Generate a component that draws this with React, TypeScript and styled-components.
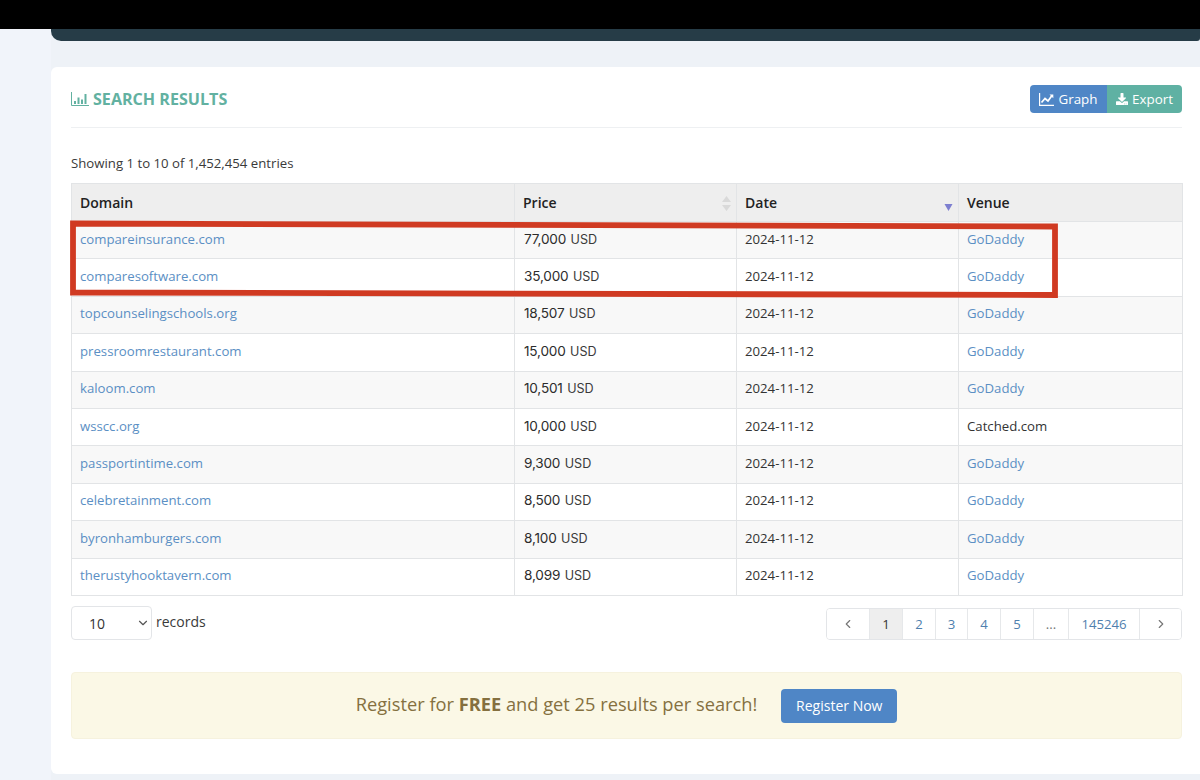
import { createGlobalStyle } from "styled-components"
import styled from "styled-components"
import { ChevronDown, ChevronLeft, ChevronRight } from "lucide-react"
import { FaDownload } from "react-icons/fa"

const GlobalStyle = createGlobalStyle`
  html, body {
    margin: 0;
    height: 780px;
    overflow: hidden;
    background: #f1f4fa;
    font-family: "Open Sans", "Liberation Sans", sans-serif;
    font-size: 14px;
    color: #333;
  }
`

const TopBar = styled.div`
  height: 29px;
  background: #000;
`

const Main = styled.main`
  margin-left: 51px;
  height: 751px;
  background: #eef2f7;
`

const DarkStrip = styled.div`
  height: 12px;
  background: #263c47;
  border-bottom-left-radius: 10px;
  border-bottom-right-radius: 3px;
`

const Card = styled.section`
  position: relative;
  margin-top: 26px;
  height: 707px;
  box-sizing: border-box;
  padding: 0 18px 0 20px;
  background: #fff;
  border-radius: 6px 0 0 6px;
`

const CardHeader = styled.header`
  display: flex;
  justify-content: space-between;
  align-items: center;
  height: 61px;
  box-sizing: border-box;
  padding-top: 4px;
  border-bottom: 1px solid #eef0f2;
`

const Title = styled.h2`
  display: flex;
  align-items: center;
  gap: 4px;
  margin: 0;
  font-size: 16.1px;
  font-weight: 700;
  color: #62b1a1;
`

const ButtonGroup = styled.div`
  display: flex;
  height: 28px;
  border-radius: 4px;
  overflow: hidden;
`

const GroupButton = styled.button<{ $tone: "blue" | "teal"; $width: number }>`
  display: flex;
  align-items: center;
  justify-content: center;
  gap: 4px;
  width: ${(p) => p.$width}px;
  padding: 0;
  border: 0;
  color: #fff;
  font-family: inherit;
  font-size: 13.4px;
  background: ${(p) => (p.$tone === "blue" ? "#4f86c6" : "#5fb1a3")};
`

const Info = styled.p`
  margin: 26px 0 10px;
  height: 19px;
  line-height: 19px;
  font-size: 13.2px;
  color: #3a3a3a;
`

const Table = styled.table`
  width: 1111px;
  table-layout: fixed;
  border-collapse: collapse;
  border: 1px solid #e2e4e6;
`

const Th = styled.th`
  position: relative;
  height: 38px;
  padding: 0 8px;
  box-sizing: border-box;
  text-align: left;
  font-size: 14px;
  font-weight: 600;
  color: #222;
  background: #eeeeee;
  border: 1px solid #e2e4e6;
  border-top: 0;
`

const SortIcon = styled.svg`
  position: absolute;
  right: 5px;
  top: 12px;
`

const Row = styled.tr`
  height: 37.4px;
  &:nth-child(odd) {
    background: #f8f8f8;
  }
`

const Td = styled.td`
  padding: 0 8px 3px;
  box-sizing: border-box;
  font-size: 13.2px;
  color: #333;
  border: 1px solid #e2e4e6;
  white-space: nowrap;
`

const Link = styled.a`
  color: #5b8fc4;
  text-decoration: none;
`

const Amount = styled.span`
  margin-left: 1px;
  font-family: Inter, "Liberation Sans", sans-serif;
  font-size: 13.6px;
  letter-spacing: -0.2px;
  color: #2c2c2c;
`

const Currency = styled.span`
  margin-left: 4.5px;
  font-family: Inter, "Liberation Sans", sans-serif;
  font-size: 12.6px;
  color: #3a3a3a;
`

const Controls = styled.div`
  display: flex;
  justify-content: space-between;
  align-items: flex-start;
  margin-top: 10px;
  height: 66px;
`

const RecordsLabel = styled.label`
  display: flex;
  align-items: flex-start;
  gap: 4px;
  line-height: 32px;
  color: #3a3a3a;
  font-size: 14px;
`

const SelectWrap = styled.div`
  position: relative;
  width: 81px;
  height: 34px;
`

const Select = styled.select`
  appearance: none;
  width: 100%;
  height: 100%;
  box-sizing: border-box;
  padding: 2px 0 0 17px;
  border: 1px solid #e3e5e8;
  border-radius: 4px;
  background: #fff;
  color: #333;
  font-family: inherit;
  font-size: 14px;
`

const SelectChevron = styled(ChevronDown)`
  position: absolute;
  right: 2px;
  top: 10px;
  color: #555;
  pointer-events: none;
`

const Pagination = styled.nav`
  display: flex;
  height: 32px;
  margin-top: 2px;
  box-sizing: border-box;
  border: 1px solid #e3e5e8;
  border-radius: 4px;
  overflow: hidden;
`

const PageItem = styled.a<{ $width: number; $active?: boolean; $muted?: boolean }>`
  display: flex;
  align-items: center;
  justify-content: center;
  width: ${(p) => p.$width}px;
  box-sizing: border-box;
  border-left: 1px solid #e6e8ea;
  font-size: 13.2px;
  color: ${(p) => (p.$active ? "#333" : p.$muted ? "#777" : "#4f7fae")};
  background: ${(p) => (p.$active ? "#eeeeee" : "#fff")};
  &:first-child {
    border-left: 0;
  }
`

const Banner = styled.aside`
  display: flex;
  align-items: center;
  justify-content: center;
  gap: 24px;
  width: 1111px;
  height: 67px;
  box-sizing: border-box;
  background: #fbf8e6;
  border: 1px solid #f6f2de;
  border-radius: 4px;
  color: #85703f;
  font-size: 18.25px;
`

const BannerText = styled.span`
  margin-bottom: 3px;
`

const RegisterButton = styled.button`
  width: 116px;
  height: 34px;
  margin-top: 1px;
  padding: 0;
  border: 0;
  border-radius: 4px;
  background: #4f86c6;
  color: #fff;
  font-family: inherit;
  font-size: 14px;
`

const Annotation = styled.svg`
  position: absolute;
  left: 0;
  top: 0;
  pointer-events: none;
`

type Result = {
  domain: string
  amount: string
  venue: string
}

const results: Result[] = [
  { domain: "compareinsurance.com", amount: "77,000", venue: "GoDaddy" },
  { domain: "comparesoftware.com", amount: "35,000", venue: "GoDaddy" },
  { domain: "topcounselingschools.org", amount: "18,507", venue: "GoDaddy" },
  { domain: "pressroomrestaurant.com", amount: "15,000", venue: "GoDaddy" },
  { domain: "kaloom.com", amount: "10,501", venue: "GoDaddy" },
  { domain: "wsscc.org", amount: "10,000", venue: "Catched.com" },
  { domain: "passportintime.com", amount: "9,300", venue: "GoDaddy" },
  { domain: "celebretainment.com", amount: "8,500", venue: "GoDaddy" },
  { domain: "byronhamburgers.com", amount: "8,100", venue: "GoDaddy" },
  { domain: "therustyhooktavern.com", amount: "8,099", venue: "GoDaddy" },
]

const pages = [
  { label: "1", width: 33, active: true },
  { label: "2", width: 33 },
  { label: "3", width: 32 },
  { label: "4", width: 33 },
  { label: "5", width: 33 },
  { label: "...", width: 35, muted: true },
  { label: "145246", width: 71 },
]

function BarsIcon() {
  return (
    <svg width="18" height="14" viewBox="0 0 18 14" fill="none" stroke="#62b1a1">
      <path d="M.5 0v13.5H18" />
      <path d="M4 12V9M7.5 12V5.5M11 12V7.5M14.5 12V2" strokeWidth="2" />
    </svg>
  )
}

function LineChartIcon() {
  return (
    <svg width="15" height="13" viewBox="0 0 15 13" fill="none" stroke="#fff">
      <path d="M.6 0v12.4H15" strokeWidth="1.2" />
      <path d="M2.5 9.5 6 5.5l3 2.5 4-5.5" strokeWidth="1.7" />
      <path d="M10.5 1.5h3.8v3.8z" fill="#fff" stroke="none" />
    </svg>
  )
}

export default function App() {
  return (
    <>
      <GlobalStyle />
      <TopBar />
      <Main>
        <DarkStrip />
        <Card>
          <CardHeader>
            <Title>
              <BarsIcon />
              SEARCH RESULTS
            </Title>
            <ButtonGroup>
              <GroupButton $tone="blue" $width={77}>
                <LineChartIcon /> Graph
              </GroupButton>
              <GroupButton $tone="teal" $width={75}>
                <FaDownload size={12} /> Export
              </GroupButton>
            </ButtonGroup>
          </CardHeader>
          <Info>Showing 1 to 10 of 1,452,454 entries</Info>
          <Table>
            <colgroup>
              <col style={{ width: 443 }} />
              <col style={{ width: 222 }} />
              <col style={{ width: 222 }} />
              <col style={{ width: 224 }} />
            </colgroup>
            <thead>
              <tr>
                <Th>Domain</Th>
                <Th>
                  Price
                  <SortIcon width="9" height="15" viewBox="0 0 9 15" fill="#d9d9d9">
                    <path d="M4.5 0 9 6H0zM4.5 15 0 9h9z" />
                  </SortIcon>
                </Th>
                <Th>
                  Date
                  <SortIcon width="9" height="15" viewBox="0 0 9 15" fill="#7d7fd0">
                    <path d="M.5 8h8l-4 7z" />
                  </SortIcon>
                </Th>
                <Th>Venue</Th>
              </tr>
            </thead>
            <tbody>
              {results.map((r) => (
                <Row key={r.domain}>
                  <Td>
                    <Link>{r.domain}</Link>
                  </Td>
                  <Td>
                    <Amount>{r.amount}</Amount>
                    <Currency>USD</Currency>
                  </Td>
                  <Td>2024-11-12</Td>
                  <Td>{r.venue === "GoDaddy" ? <Link>{r.venue}</Link> : r.venue}</Td>
                </Row>
              ))}
            </tbody>
          </Table>
          <Controls>
            <RecordsLabel>
              <SelectWrap>
                <Select defaultValue="10">
                  <option>10</option>
                  <option>25</option>
                </Select>
                <SelectChevron size={14} />
              </SelectWrap>
              records
            </RecordsLabel>
            <Pagination>
              <PageItem $width={42} $muted>
                <ChevronLeft size={14} />
              </PageItem>
              {pages.map((p) => (
                <PageItem key={p.label} $width={p.width} $active={p.active} $muted={p.muted}>
                  {p.label}
                </PageItem>
              ))}
              <PageItem $width={42} $muted>
                <ChevronRight size={14} />
              </PageItem>
            </Pagination>
          </Controls>
          <Banner>
            <BannerText>
              Register for <strong>FREE</strong> and get 25 results per search!
            </BannerText>
            <RegisterButton>Register Now</RegisterButton>
          </Banner>
          <Annotation width="1040" height="250" viewBox="0 0 1040 250" fill="none">
            <path d="M22 156.5 1004 159.5 1004 228 22 225.5Z" stroke="#d03a22" strokeWidth="5.8" />
          </Annotation>
        </Card>
      </Main>
    </>
  )
}
